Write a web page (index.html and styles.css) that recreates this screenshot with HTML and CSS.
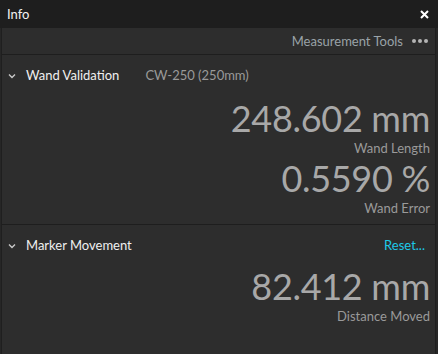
FILE: index.html
```html
<!DOCTYPE html>
<html>
<head>
<meta charset="utf-8">
<link rel="stylesheet" href="styles.css">
</head>
<body>
<div class="panel">
  <div class="titlebar">
    <span class="title">Info</span>
    <svg class="close" width="9" height="9" viewBox="0 0 9 9"><path d="M1 1 L8 8 M8 1 L1 8" stroke="#ffffff" stroke-width="2"/></svg>
  </div>
  <div class="content">
    <div class="toolbar">
      <span class="tools">Measurement Tools</span>
      <span class="dots"><i></i><i></i><i></i></span>
    </div>
    <div class="section">
      <div class="sec-head">
        <svg class="chev" width="8" height="6" viewBox="0 0 8 6"><path d="M1 1.5 L4 4.5 L7 1.5" fill="none" stroke="#c8c8c8" stroke-width="1.4"/></svg>
        <span class="sec-title">Wand Validation</span>
        <span class="sec-sub">CW-250 (250mm)</span>
      </div>
      <div class="metric">
        <div class="value">248.602 mm</div>
        <div class="label">Wand Length</div>
      </div>
      <div class="metric">
        <div class="value">0.5590 %</div>
        <div class="label">Wand Error</div>
      </div>
    </div>
    <div class="section last">
      <div class="sec-head">
        <svg class="chev" width="8" height="6" viewBox="0 0 8 6"><path d="M1 1.5 L4 4.5 L7 1.5" fill="none" stroke="#c8c8c8" stroke-width="1.4"/></svg>
        <span class="sec-title">Marker Movement</span>
        <span class="reset">Reset...</span>
      </div>
      <div class="metric">
        <div class="value">82.412 mm</div>
        <div class="label">Distance Moved</div>
      </div>
    </div>
  </div>
</div>
</body>
</html>
```
FILE: styles.css
```css
* { box-sizing: border-box; }
html, body { margin: 0; padding: 0; }
body {
  width: 438px;
  height: 354px;
  background: #2d2d2d;
  font-family: Lato, "Noto Sans", sans-serif;
  overflow: hidden;
}
.panel {
  width: 438px;
  height: 354px;
  display: flex;
  flex-direction: column;
  background: #262626;
}
.titlebar {
  height: 28px;
  background: #1e1e1e;
  display: flex;
  align-items: center;
  justify-content: space-between;
  padding: 0 9px 0 7px;
}
.title {
  color: #f2f2f2;
  font-size: 13px;
}
.content {
  flex: 1;
  margin: 0 2px 0 1px;
  border-left: 1px solid #1f1f1f;
  border-right: 1px solid #1f1f1f;
  background: #2d2d2d;
}
.toolbar {
  height: 27px;
  border-bottom: 1px solid #1e1e1e;
  display: flex;
  align-items: center;
  justify-content: flex-end;
  padding-right: 7px;
}
.tools {
  color: #9aa3a8;
  font-size: 13px;
}
.dots {
  display: flex;
  gap: 2px;
  margin-left: 9px;
}
.dots i {
  width: 4px;
  height: 4px;
  border-radius: 50%;
  background: #b4b4b4;
}
.section {
  border-bottom: 1px solid #1e1e1e;
  padding-bottom: 7px;
}
.section.last { border-bottom: none; }
.sec-head {
  height: 40px;
  display: flex;
  align-items: center;
  padding-left: 6px;
  padding-right: 10px;
}
.section .sec-head + .metric { margin-top: 2px; }
.section.last .sec-head + .metric { margin-top: 0; }
.chev { margin-right: 10px; margin-top: 1px; }
.sec-title {
  color: #f0f0f0;
  font-size: 13px;
}
.sec-sub {
  color: #9a9a9a;
  font-size: 13px;
  margin-left: 26px;
}
.reset {
  margin-left: auto;
  color: #1ec8e8;
  font-size: 13px;
}
.metric {
  text-align: right;
  padding-right: 5px;
}
.value {
  color: #a8a8a8;
  font-size: 36px;
  font-weight: 400;
  line-height: 42px;
  letter-spacing: -0.3px;
}
.label {
  color: #9a9a9a;
  font-size: 13px;
  line-height: 18px;
}
```
